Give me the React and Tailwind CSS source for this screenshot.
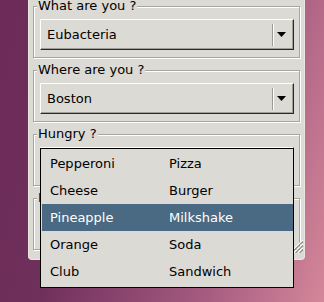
const groups = [
    { title: "What are you ?", value: "Eubacteria" },
    { title: "Where are you ?", value: "Boston" },
    { title: "Hungry ?", value: "" },
    { title: "Drink ?", value: "" },
];

const menu = [
    ["Pepperoni", "Pizza"],
    ["Cheese", "Burger"],
    ["Pineapple", "Milkshake"],
    ["Orange", "Soda"],
    ["Club", "Sandwich"],
];

const ComboBox = ({ value }) => (
    <div className="ml-[6px] mr-[5px] mt-[5px] mb-[7px] h-[31px] flex items-center bg-[#dcdad5] border border-t-white border-l-white border-r-[#2b2a28] border-b-[#2b2a28] shadow-[inset_-1px_-1px_0_#a19e97]">
        <span className="flex-1 pl-[6px] text-[13px] leading-[16px] text-black">{value}</span>
        <div className="h-[22px] w-[2px] border-l border-l-[#9c9a94] border-r border-r-white" />
        <div className="w-[15px] mr-[4px] flex justify-center">
            <svg width="9" height="5" viewBox="0 0 9 5">
                <polygon points="0,0 9,0 4.5,5" fill="#000" />
            </svg>
        </div>
    </div>
);

const Group = ({ title, value, className = "" }) => (
    <fieldset className={`border border-[#a8a59e] shadow-[inset_1px_1px_0_#fff,1px_1px_0_#fff] ${className}`}>
        <legend className="ml-[3px] px-[1px] bg-[#dcdad5] text-[13px] leading-[16px] text-black">{title}</legend>
        <ComboBox value={value} />
    </fieldset>
);

// diagonal grip in the window's lower right corner
const SizeGrip = () => (
    <svg className="absolute right-[1px] bottom-[6px]" width="13" height="13" viewBox="0 0 13 13">
        <path d="M13 0L0 13" stroke="#fff" strokeWidth="1.2" />
        <path d="M13 1.5L1.5 13" stroke="#8e8b85" strokeWidth="1.2" />
        <path d="M13 4L4 13" stroke="#fff" strokeWidth="1.2" />
        <path d="M13 5.5L5.5 13" stroke="#8e8b85" strokeWidth="1.2" />
        <path d="M13 8L8 13" stroke="#fff" strokeWidth="1.2" />
        <path d="M13 9.5L9.5 13" stroke="#8e8b85" strokeWidth="1.2" />
    </svg>
);

const Popup = () => (
    <div className="absolute left-[40px] top-[148px] w-[254px] h-[140px] bg-[#dcdad5] border border-black pl-[1px] pt-[1px] pb-[2px]">
        {menu.map(([a, b], i) => (
            <div
                key={a}
                className={`h-[27px] grid grid-cols-[127px_1fr] items-center text-[13px] leading-[16px] ${i === 2 ? "bg-[#4a6983] text-white" : "text-black"}`}
            >
                <span className="pl-[8px]">{a}</span>
                <span>{b}</span>
            </div>
        ))}
    </div>
);

export default function App() {
    return (
        <div className="relative w-[324px] h-[302px] overflow-hidden font-['DejaVu_Sans',sans-serif] bg-[linear-gradient(105deg,#6b2a58_0%,#70305c_30%,#a55b80_70%,#d4879a_100%)]">
            <div className="relative ml-[28px] w-[277px] h-[260px] bg-[#dcdad5] rounded-b-[4px] border-x border-b border-[#e9e6e0] px-[4px] flex flex-col gap-[4px]">
                {groups.map((g, i) => (
                    <Group key={g.title} title={g.title} value={g.value} className={i === 0 ? "-mt-[2px]" : ""} />
                ))}
                <SizeGrip />
            </div>
            <Popup />
        </div>
    );
}
